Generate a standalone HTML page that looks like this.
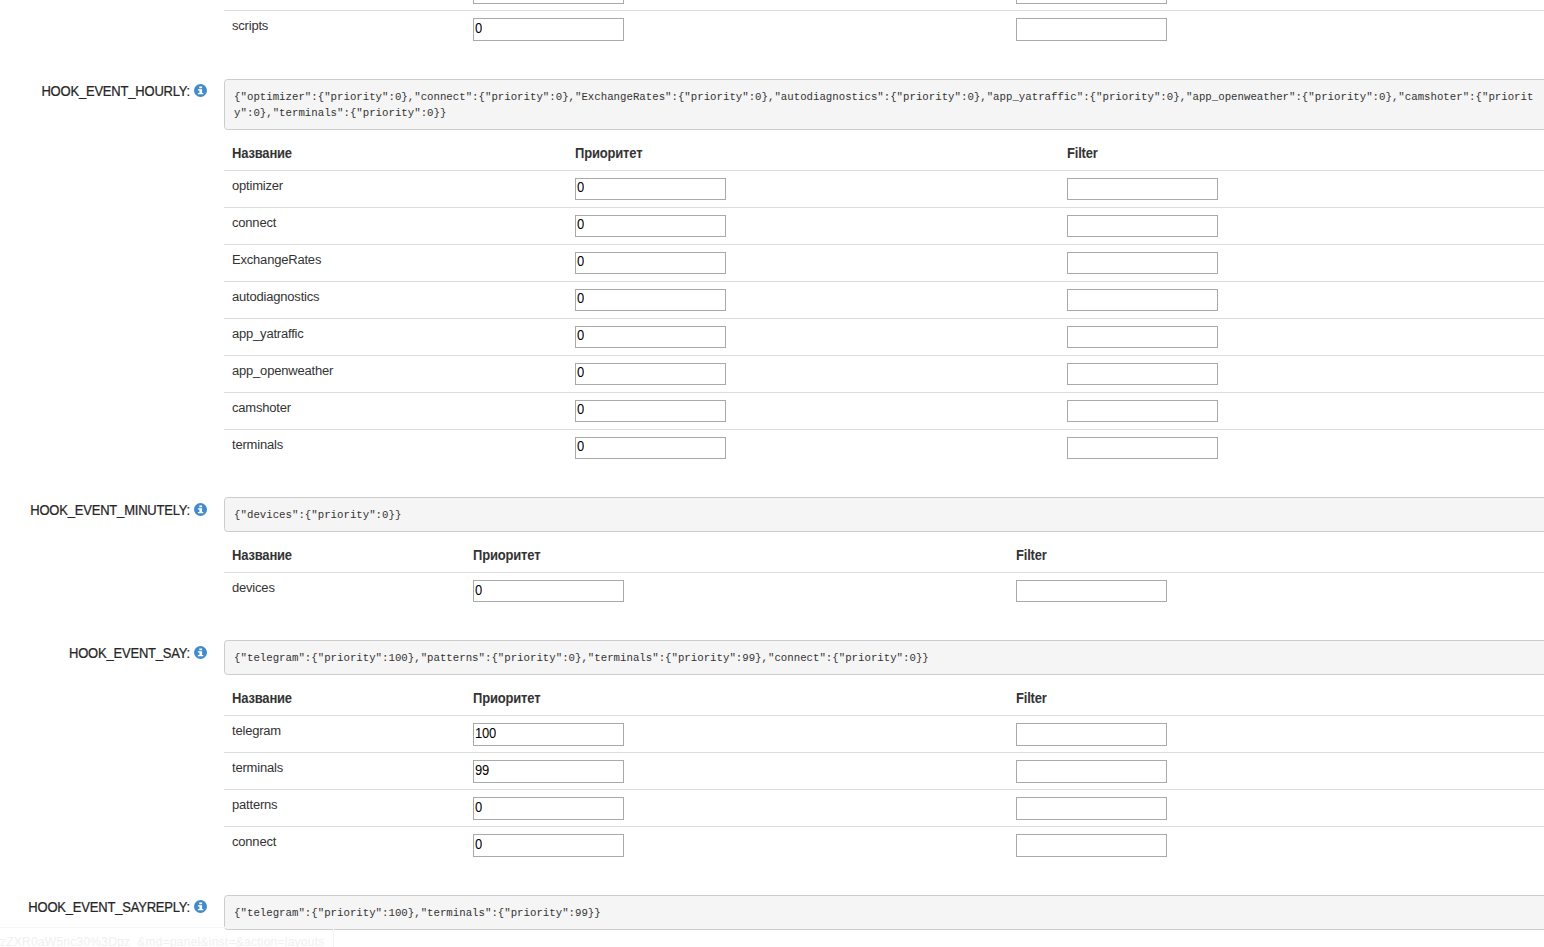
<!DOCTYPE html>
<html lang="ru"><head><meta charset="utf-8"><title>Settings</title>
<style>
html,body{margin:0;padding:0;background:#fff;}
body{width:1544px;height:947px;overflow:hidden;position:relative;font-family:"Liberation Sans",sans-serif;font-size:13px;line-height:16px;color:#333;}
.t{position:absolute;white-space:nowrap;height:16px;line-height:16px;font-size:13px;letter-spacing:-0.18px;transform:scaleY(1.06);transform-origin:0 12.5px;}
.lb{right:1354px;text-align:right;color:#262626;transform:scaleY(1.075);-webkit-text-stroke:0.22px #262626;letter-spacing:-0.2px;}
.th{font-weight:bold;}
.td{transform:scaleY(1.04);letter-spacing:-0.2px;}
.v{color:#000;left:1.0px;letter-spacing:-0.25px;transform:scaleY(1.075);}
.ln{position:absolute;left:224px;width:1320px;height:1px;background:#ddd;}
.pre{position:absolute;left:224px;width:1340px;box-sizing:border-box;background:#f5f5f5;border:1px solid #ccc;border-radius:3.6px;padding:8.5px 9.5px 10.5px 9.1px;margin:0;font-family:"Liberation Mono","DejaVu Sans Mono",monospace;font-size:10.73px;line-height:16px;color:#333;white-space:pre;}
.in{position:absolute;box-sizing:border-box;width:151px;height:23px;border:1px solid #a9a9a9;background:#fff;overflow:hidden;}
.ic{position:absolute;left:194px;width:13px;height:13px;}
#sb{position:absolute;left:0;top:927px;width:334px;height:20px;box-sizing:border-box;border-top:1px solid #f6f6f6;border-right:1px solid #f4f4f4;background:transparent;color:#f0f0f0;font-size:12px;line-height:28px;letter-spacing:0.25px;white-space:nowrap;overflow:hidden;}
</style></head><body>

<div class="in" style="left:473px;top:-19px"></div>
<div class="in" style="left:1016px;top:-19px"></div>
<div class="ln" style="top:10px"></div>
<div class="t td" style="left:232px;top:17.5px;">scripts</div>
<div class="in" style="left:473px;top:18px"><div class="t v" style="top:1.5px">0</div></div>
<div class="in" style="left:1016px;top:18px"></div>
<div class="t lb" style="top:83.5px;">HOOK_EVENT_HOURLY:</div>
<svg class="ic" style="top:84px" viewBox="0 0 13 13"><circle cx="6.5" cy="6.5" r="6.5" fill="#428bca"/><path d="M5.3 2.5H8.1V4.2H5.3zM3.9 5.3H8.1V8.9H9.3V10.2H3.9V8.9H5.4V6.6H3.9z" fill="#fff"/></svg>
<pre class="pre" style="top:79px;height:51px">{"optimizer":{"priority":0},"connect":{"priority":0},"ExchangeRates":{"priority":0},"autodiagnostics":{"priority":0},"app_yatraffic":{"priority":0},"app_openweather":{"priority":0},"camshoter":{"priorit
y":0},"terminals":{"priority":0}}</pre>
<div class="t th" style="left:232px;top:145.5px;">Название</div>
<div class="t th" style="left:575px;top:145.5px;">Приоритет</div>
<div class="t th" style="left:1067px;top:145.5px;">Filter</div>
<div class="ln" style="top:170px"></div>
<div class="t td" style="left:232px;top:177.5px;">optimizer</div>
<div class="in" style="left:575px;top:178px;height:22px"><div class="t v" style="top:0.5px">0</div></div>
<div class="in" style="left:1067px;top:178px;height:22px"></div>
<div class="ln" style="top:207px"></div>
<div class="t td" style="left:232px;top:214.5px;">connect</div>
<div class="in" style="left:575px;top:215px;height:22px"><div class="t v" style="top:0.5px">0</div></div>
<div class="in" style="left:1067px;top:215px;height:22px"></div>
<div class="ln" style="top:244px"></div>
<div class="t td" style="left:232px;top:251.5px;">ExchangeRates</div>
<div class="in" style="left:575px;top:252px;height:22px"><div class="t v" style="top:0.5px">0</div></div>
<div class="in" style="left:1067px;top:252px;height:22px"></div>
<div class="ln" style="top:281px"></div>
<div class="t td" style="left:232px;top:288.5px;">autodiagnostics</div>
<div class="in" style="left:575px;top:289px;height:22px"><div class="t v" style="top:0.5px">0</div></div>
<div class="in" style="left:1067px;top:289px;height:22px"></div>
<div class="ln" style="top:318px"></div>
<div class="t td" style="left:232px;top:325.5px;">app_yatraffic</div>
<div class="in" style="left:575px;top:326px;height:22px"><div class="t v" style="top:0.5px">0</div></div>
<div class="in" style="left:1067px;top:326px;height:22px"></div>
<div class="ln" style="top:355px"></div>
<div class="t td" style="left:232px;top:362.5px;">app_openweather</div>
<div class="in" style="left:575px;top:363px;height:22px"><div class="t v" style="top:0.5px">0</div></div>
<div class="in" style="left:1067px;top:363px;height:22px"></div>
<div class="ln" style="top:392px"></div>
<div class="t td" style="left:232px;top:399.5px;">camshoter</div>
<div class="in" style="left:575px;top:400px;height:22px"><div class="t v" style="top:0.5px">0</div></div>
<div class="in" style="left:1067px;top:400px;height:22px"></div>
<div class="ln" style="top:429px"></div>
<div class="t td" style="left:232px;top:436.5px;">terminals</div>
<div class="in" style="left:575px;top:437px;height:22px"><div class="t v" style="top:0.5px">0</div></div>
<div class="in" style="left:1067px;top:437px;height:22px"></div>
<div class="t lb" style="top:502.5px;">HOOK_EVENT_MINUTELY:</div>
<svg class="ic" style="top:503px" viewBox="0 0 13 13"><circle cx="6.5" cy="6.5" r="6.5" fill="#428bca"/><path d="M5.3 2.5H8.1V4.2H5.3zM3.9 5.3H8.1V8.9H9.3V10.2H3.9V8.9H5.4V6.6H3.9z" fill="#fff"/></svg>
<pre class="pre" style="top:497px;height:35px">{"devices":{"priority":0}}</pre>
<div class="t th" style="left:232px;top:547.5px;">Название</div>
<div class="t th" style="left:473px;top:547.5px;">Приоритет</div>
<div class="t th" style="left:1016px;top:547.5px;">Filter</div>
<div class="ln" style="top:572px"></div>
<div class="t td" style="left:232px;top:579.5px;">devices</div>
<div class="in" style="left:473px;top:580px;height:22px"><div class="t v" style="top:1.5px">0</div></div>
<div class="in" style="left:1016px;top:580px;height:22px"></div>
<div class="t lb" style="top:645.5px;">HOOK_EVENT_SAY:</div>
<svg class="ic" style="top:646px" viewBox="0 0 13 13"><circle cx="6.5" cy="6.5" r="6.5" fill="#428bca"/><path d="M5.3 2.5H8.1V4.2H5.3zM3.9 5.3H8.1V8.9H9.3V10.2H3.9V8.9H5.4V6.6H3.9z" fill="#fff"/></svg>
<pre class="pre" style="top:640px;height:35px">{"telegram":{"priority":100},"patterns":{"priority":0},"terminals":{"priority":99},"connect":{"priority":0}}</pre>
<div class="t th" style="left:232px;top:690.5px;">Название</div>
<div class="t th" style="left:473px;top:690.5px;">Приоритет</div>
<div class="t th" style="left:1016px;top:690.5px;">Filter</div>
<div class="ln" style="top:715px"></div>
<div class="t td" style="left:232px;top:722.5px;">telegram</div>
<div class="in" style="left:473px;top:723px"><div class="t v" style="top:1.5px">100</div></div>
<div class="in" style="left:1016px;top:723px"></div>
<div class="ln" style="top:752px"></div>
<div class="t td" style="left:232px;top:759.5px;">terminals</div>
<div class="in" style="left:473px;top:760px"><div class="t v" style="top:1.5px">99</div></div>
<div class="in" style="left:1016px;top:760px"></div>
<div class="ln" style="top:789px"></div>
<div class="t td" style="left:232px;top:796.5px;">patterns</div>
<div class="in" style="left:473px;top:797px"><div class="t v" style="top:1.5px">0</div></div>
<div class="in" style="left:1016px;top:797px"></div>
<div class="ln" style="top:826px"></div>
<div class="t td" style="left:232px;top:833.5px;">connect</div>
<div class="in" style="left:473px;top:834px"><div class="t v" style="top:1.5px">0</div></div>
<div class="in" style="left:1016px;top:834px"></div>
<div class="t lb" style="top:899.5px;">HOOK_EVENT_SAYREPLY:</div>
<svg class="ic" style="top:900px" viewBox="0 0 13 13"><circle cx="6.5" cy="6.5" r="6.5" fill="#428bca"/><path d="M5.3 2.5H8.1V4.2H5.3zM3.9 5.3H8.1V8.9H9.3V10.2H3.9V8.9H5.4V6.6H3.9z" fill="#fff"/></svg>
<pre class="pre" style="top:895px;height:35px">{"telegram":{"priority":100},"terminals":{"priority":99}}</pre>
<div id="sb">zZXR0aW5nc30%3Dpz_&amp;md=panel&amp;inst=&amp;action=layouts</div>
</body></html>
